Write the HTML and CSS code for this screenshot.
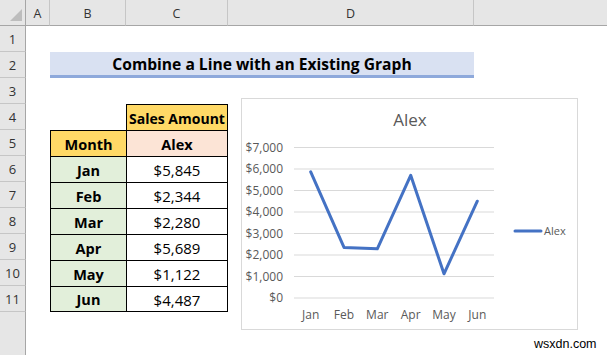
FILE: index.html
```html
<!DOCTYPE html>
<html>
<head>
<meta charset="utf-8">
<link rel="stylesheet" href="styles.css">
</head>
<body>
<div class="sheet">
  <div class="corner"><svg width="14" height="14" viewBox="0 0 14 14"><polygon points="13,1 13,13 1,13" fill="#BDBDBD"/></svg></div>
  <div class="colhdr">A</div>
  <div class="colhdr">B</div>
  <div class="colhdr">C</div>
  <div class="colhdr">D</div>
  <div class="colhdr last"></div>

  <div class="rowhdr">1</div>
  <div class="blank span5"></div>

  <div class="rowhdr">2</div>
  <div class="blank"></div>
  <div class="title">Combine a Line with an Existing Graph</div>
  <div class="blank"></div>

  <div class="rowhdr">3</div>
  <div class="blank span5"></div>

  <div class="rowhdr">4</div>
  <div class="blank span2"></div>
  <div class="cell c hdr-sales top">Sales Amount</div>
  <div class="blank span2"></div>

  <div class="rowhdr">5</div>
  <div class="blank"></div>
  <div class="cell b hdr-month top">Month</div>
  <div class="cell c hdr-alex">Alex</div>
  <div class="blank span2"></div>

  <div class="rowhdr">6</div>
  <div class="blank"></div>
  <div class="cell b m">Jan</div>
  <div class="cell c v">$5,845</div>
  <div class="blank span2"></div>

  <div class="rowhdr">7</div>
  <div class="blank"></div>
  <div class="cell b m">Feb</div>
  <div class="cell c v">$2,344</div>
  <div class="blank span2"></div>

  <div class="rowhdr">8</div>
  <div class="blank"></div>
  <div class="cell b m">Mar</div>
  <div class="cell c v">$2,280</div>
  <div class="blank span2"></div>

  <div class="rowhdr">9</div>
  <div class="blank"></div>
  <div class="cell b m">Apr</div>
  <div class="cell c v">$5,689</div>
  <div class="blank span2"></div>

  <div class="rowhdr">10</div>
  <div class="blank"></div>
  <div class="cell b m">May</div>
  <div class="cell c v">$1,122</div>
  <div class="blank span2"></div>

  <div class="rowhdr">11</div>
  <div class="blank"></div>
  <div class="cell b m bottom">Jun</div>
  <div class="cell c v bottom">$4,487</div>
  <div class="blank span2"></div>

  <div class="rowhdr rest"></div>
  <div class="blank span5"></div>

  <div class="chart">
    <svg width="337" height="232" viewBox="0 0 337 232">
      <text class="ctitle" x="169" y="28" text-anchor="middle">Alex</text>
      <g stroke="#D9D9D9" stroke-width="1">
        <line x1="53" y1="49.5" x2="253" y2="49.5"/>
        <line x1="53" y1="71" x2="253" y2="71"/>
        <line x1="53" y1="92.5" x2="253" y2="92.5"/>
        <line x1="53" y1="114" x2="253" y2="114"/>
        <line x1="53" y1="135.5" x2="253" y2="135.5"/>
        <line x1="53" y1="157" x2="253" y2="157"/>
        <line x1="53" y1="178.5" x2="253" y2="178.5"/>
        <line x1="53" y1="200" x2="253" y2="200"/>
      </g>
      <g class="axis" text-anchor="end">
        <text x="42" y="53.5">$7,000</text>
        <text x="42" y="75">$6,000</text>
        <text x="42" y="96.5">$5,000</text>
        <text x="42" y="118">$4,000</text>
        <text x="42" y="139.5">$3,000</text>
        <text x="42" y="161">$2,000</text>
        <text x="42" y="182.5">$1,000</text>
        <text x="42" y="204">$0</text>
      </g>
      <g class="axis" text-anchor="middle">
        <text x="69.7" y="220.5">Jan</text>
        <text x="103" y="220.5">Feb</text>
        <text x="136.3" y="220.5">Mar</text>
        <text x="169.7" y="220.5">Apr</text>
        <text x="203" y="220.5">May</text>
        <text x="236.3" y="220.5">Jun</text>
      </g>
      <polyline points="69.7,73.9 103,149.4 136.3,150.8 169.7,77.3 203,175.8 236.3,103.2" fill="none" stroke="#4472C4" stroke-width="3" stroke-linejoin="round" stroke-linecap="round"/>
      <line x1="274" y1="133" x2="300" y2="133" stroke="#4472C4" stroke-width="3" stroke-linecap="round"/>
      <text class="legend" x="303" y="137">Alex</text>
    </svg>
  </div>
  <div class="watermark">wsxdn.com</div>
</div>
</body>
</html>
```

FILE: styles.css
```css
html, body {
  margin: 0;
  padding: 0;
  background: #fff;
}
.sheet {
  position: relative;
  width: 607px;
  height: 355px;
  overflow: hidden;
  display: grid;
  grid-template-columns: 26px 24px 76px 102px 246px 1fr;
  grid-template-rows: 26px repeat(11, 26px) 1fr;
  font-family: "Open Sans", "Liberation Sans", sans-serif;
}
.corner {
  background: #E6E6E6;
  border-right: 1px solid #A6A6A6;
  border-bottom: 1px solid #A6A6A6;
  box-sizing: border-box;
  display: flex;
  align-items: flex-end;
  justify-content: flex-end;
  padding: 0 2px 3px 0;
}
.colhdr {
  background: #E6E6E6;
  border-right: 1px solid #C6C6C6;
  border-bottom: 1px solid #A6A6A6;
  box-sizing: border-box;
  display: flex;
  align-items: center;
  justify-content: center;
  font-size: 12.5px;
  color: #333;
  padding-top: 1px;
}
.colhdr.last {
  border-right: none;
}
.rowhdr {
  background: #E6E6E6;
  border-right: 1px solid #A6A6A6;
  border-bottom: 1px solid #C6C6C6;
  box-sizing: border-box;
  display: flex;
  align-items: flex-end;
  justify-content: center;
  padding-bottom: 3px;
  font-size: 13px;
  color: #333;
}
.rowhdr.rest {
  border-bottom: none;
}
.blank { background: #fff; }
.span2 { grid-column: span 2; }
.span5 { grid-column: span 5; }
.title {
  grid-column: span 3;
  background: #D9E1F2;
  border-bottom: 3px solid #8EA9DB;
  box-sizing: border-box;
  display: flex;
  align-items: center;
  justify-content: center;
  font-weight: 700;
  font-size: 15.6px;
  color: #000;
  padding-top: 1px;
}
.cell {
  box-sizing: border-box;
  display: flex;
  align-items: center;
  justify-content: center;
  font-size: 15px;
  color: #000;
  border-top: 1px solid #000;
  border-left: 1px solid #000;
  padding-top: 1px;
}
.cell.c { border-right: 1px solid #000; }
.cell.bottom { border-bottom: 1px solid #000; }
.hdr-sales { background: #FFD966; font-weight: 700; font-size: 14px; }
.hdr-month { background: #FFD966; font-weight: 700; font-size: 14.5px; }
.hdr-alex { background: #FCE4D6; font-weight: 700; font-size: 14.5px; }
.cell.m { background: #E2EFDA; font-weight: 700; font-size: 14.5px; }
.cell.v { background: #fff; }
.chart {
  position: absolute;
  left: 241px;
  top: 98px;
  width: 337px;
  height: 232px;
  box-sizing: border-box;
  border: 1px solid #D9D9D9;
  background: #fff;
}
.chart svg {
  position: absolute;
  left: -1px;
  top: -1px;
}
.ctitle {
  font-family: "Open Sans", sans-serif;
  font-size: 17px;
  fill: #595959;
}
.axis {
  font-family: "Open Sans", sans-serif;
  font-size: 12px;
  fill: #595959;
}
.legend {
  font-family: "Open Sans", sans-serif;
  font-size: 11px;
  fill: #595959;
}
.watermark {
  position: absolute;
  left: 534px;
  top: 337px;
  font-family: "Liberation Sans", sans-serif;
  font-size: 12.5px;
  color: #000;
}
```
